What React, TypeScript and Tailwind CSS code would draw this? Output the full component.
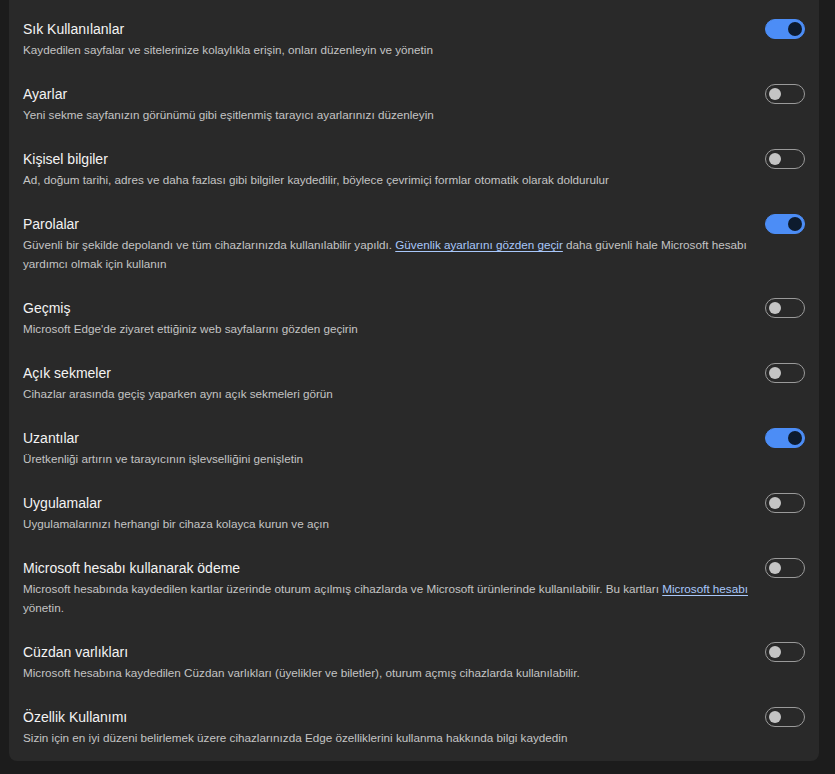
import { useState } from "react";

type SyncItem = {
  id: string;
  title: string;
  description: React.ReactNode;
  enabled: boolean;
};

const Link = ({ children }: { children: React.ReactNode }) => (
  <a href="#" className="text-[#a8c7fa] underline underline-offset-2">
    {children}
  </a>
);

const initialItems: SyncItem[] = [
  {
    id: "favorites",
    title: "Sık Kullanılanlar",
    description:
      "Kaydedilen sayfalar ve sitelerinize kolaylıkla erişin, onları düzenleyin ve yönetin",
    enabled: true,
  },
  {
    id: "settings",
    title: "Ayarlar",
    description:
      "Yeni sekme sayfanızın görünümü gibi eşitlenmiş tarayıcı ayarlarınızı düzenleyin",
    enabled: false,
  },
  {
    id: "personal",
    title: "Kişisel bilgiler",
    description:
      "Ad, doğum tarihi, adres ve daha fazlası gibi bilgiler kaydedilir, böylece çevrimiçi formlar otomatik olarak doldurulur",
    enabled: false,
  },
  {
    id: "passwords",
    title: "Parolalar",
    description: (
      <>
        Güvenli bir şekilde depolandı ve tüm cihazlarınızda kullanılabilir
        yapıldı. <Link>Güvenlik ayarlarını gözden geçir</Link> daha güvenli
        hale Microsoft hesabı yardımcı olmak için kullanın
      </>
    ),
    enabled: true,
  },
  {
    id: "history",
    title: "Geçmiş",
    description:
      "Microsoft Edge'de ziyaret ettiğiniz web sayfalarını gözden geçirin",
    enabled: false,
  },
  {
    id: "tabs",
    title: "Açık sekmeler",
    description: "Cihazlar arasında geçiş yaparken aynı açık sekmeleri görün",
    enabled: false,
  },
  {
    id: "extensions",
    title: "Uzantılar",
    description: "Üretkenliği artırın ve tarayıcının işlevselliğini genişletin",
    enabled: true,
  },
  {
    id: "apps",
    title: "Uygulamalar",
    description: "Uygulamalarınızı herhangi bir cihaza kolayca kurun ve açın",
    enabled: false,
  },
  {
    id: "payments",
    title: "Microsoft hesabı kullanarak ödeme",
    description: (
      <>
        Microsoft hesabında kaydedilen kartlar üzerinde oturum açılmış
        cihazlarda ve Microsoft ürünlerinde kullanılabilir. Bu kartları{" "}
        <Link>Microsoft hesabı</Link> yönetin.
      </>
    ),
    enabled: false,
  },
  {
    id: "wallet",
    title: "Cüzdan varlıkları",
    description:
      "Microsoft hesabına kaydedilen Cüzdan varlıkları (üyelikler ve biletler), oturum açmış cihazlarda kullanılabilir.",
    enabled: false,
  },
  {
    id: "usage",
    title: "Özellik Kullanımı",
    description:
      "Sizin için en iyi düzeni belirlemek üzere cihazlarınızda Edge özelliklerini kullanma hakkında bilgi kaydedin",
    enabled: false,
  },
];

const Toggle = ({
  checked,
  onChange,
}: {
  checked: boolean;
  onChange: () => void;
}) => (
  <button
    type="button"
    role="switch"
    aria-checked={checked}
    onClick={onChange}
    className={`flex h-5 w-10 shrink-0 items-center rounded-full border ${
      checked
        ? "justify-end border-[#4c8df6] bg-[#4c8df6] pr-[2px]"
        : "justify-start border-[#9a9a9a] bg-transparent pl-[3px]"
    }`}
  >
    <span
      className={`block rounded-full ${
        checked ? "h-[14px] w-[14px] bg-[#0d1b2e]" : "h-3 w-3 bg-[#c4c4c4]"
      }`}
    />
  </button>
);

export default function App() {
  const [items, setItems] = useState(initialItems);

  const toggle = (id: string) =>
    setItems(
      items.map((item) =>
        item.id === id ? { ...item, enabled: !item.enabled } : item
      )
    );

  return (
    <div
      className="min-h-[774px] bg-[#1c1c1c] pl-[9px] pr-4 pb-[13px]"
      style={{ fontFamily: '"Segoe UI", "Liberation Sans", sans-serif' }}
    >
      <div className="flex flex-col gap-[25px] rounded-b-lg bg-[#292929] px-[14px] pt-[19px] pb-[14px]">
        {items.map((item) => (
          <div key={item.id} className="flex items-start gap-2">
            <div className="min-w-0 flex-1">
              <div className="text-[14px] leading-5 text-[#f3f3f3]">
                {item.title}
              </div>
              <p className="mt-px text-[11.7px] leading-[19px] text-[#c4c4c4]">
                {item.description}
              </p>
            </div>
            <Toggle checked={item.enabled} onChange={() => toggle(item.id)} />
          </div>
        ))}
      </div>
    </div>
  );
}
